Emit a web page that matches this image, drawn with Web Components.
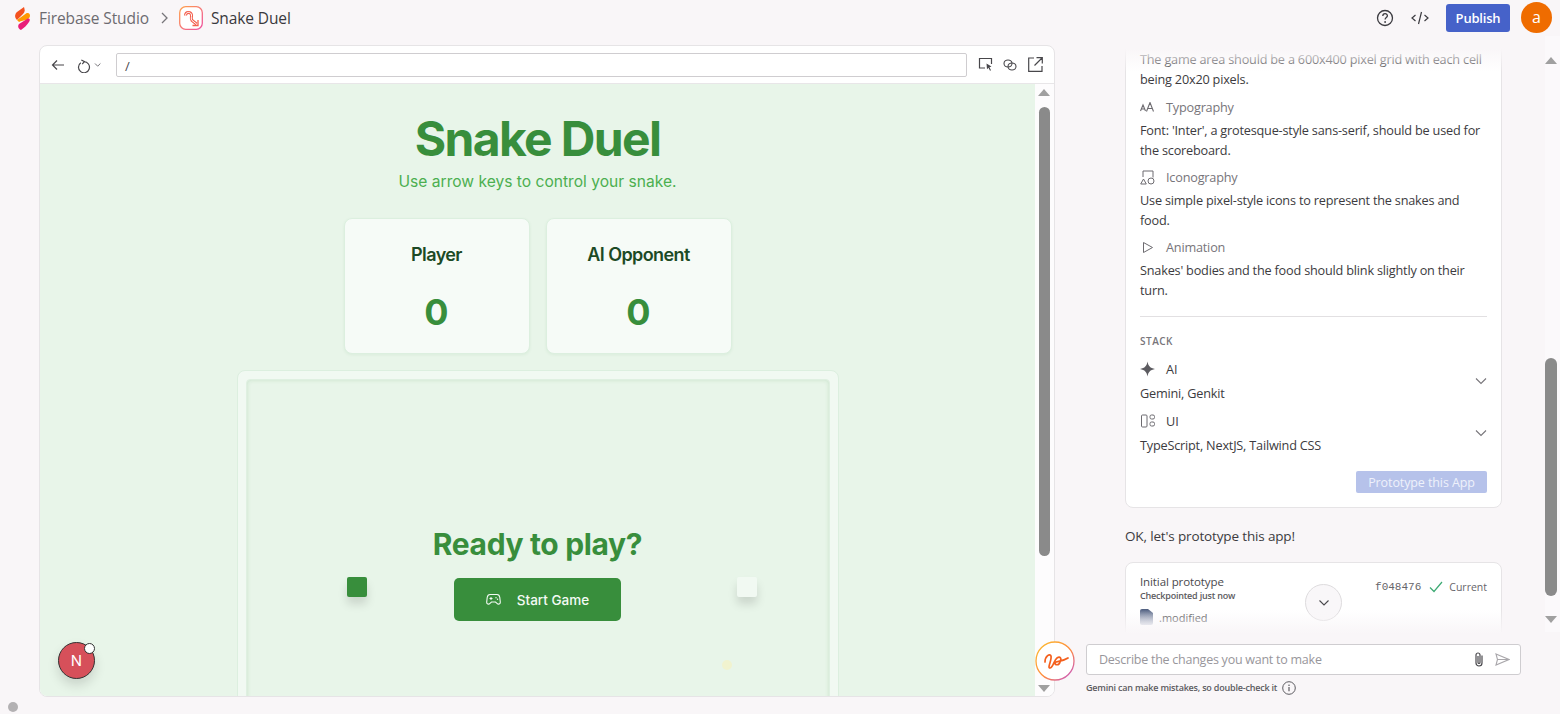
<!DOCTYPE html>
<html lang="en">
<head>
<meta charset="utf-8">
<title>Snake Duel</title>
<style>
  html, body { margin: 0; height: 100%; overflow: hidden; background: #f9f6f8; }
</style>
</head>
<body>
<app-shell>
  <top-bar slot="top"></top-bar>
  <preview-pane slot="left"></preview-pane>
  <chat-pane slot="right"></chat-pane>
</app-shell>

<script>
/*
* Small helper for the elements below.
*/
const define = (name, html) => {
  const template = document.createElement('template')
  template.innerHTML = html
  customElements.define(name, class extends HTMLElement {
    constructor () {
      super()
      this.attachShadow({ mode: 'open' }).appendChild(template.content.cloneNode(true))
    }
  })
}

define('app-shell', `
  <style>
    :host { display: block; width: 1560px; height: 714px; position: relative; overflow: hidden;
      font-family: "Open Sans", "Noto Sans", sans-serif; color: #3c3b40; }
    .main { display: flex; height: 678px; }
    .dot { position: absolute; left: 8px; top: 702px; width: 10px; height: 10px; border-radius: 50%; background: #b3b1b3; }
  </style>
  <slot name="top"></slot>
  <div class="main">
    <slot name="left"></slot>
    <slot name="right"></slot>
  </div>
  <div class="dot"></div>
`)

define('top-bar', `
  <style>
    :host { display: flex; align-items: center; height: 36px; padding: 0 8px 0 15px; box-sizing: border-box; }
    .brand { font-size: 15.5px; color: #6d6b70; margin-left: 8px; letter-spacing: -.1px; }
    .sep { margin: 0 9px 0 11px; display: flex; }
    .app { font-size: 15.5px; color: #3a393d; margin-left: 8px; letter-spacing: -.1px; }
    .grow { flex: 1; }
    .icons { display: flex; align-items: center; gap: 17px; margin-right: 17px; }
    .publish { background: #4662c9; color: #fff; border-radius: 3px; width: 64px; height: 28px; display: flex;
      align-items: center; justify-content: center; font-size: 13px; font-weight: 600; margin-right: 11px; letter-spacing: -.2px; }
    .avatar { width: 31px; height: 31px; border-radius: 50%; background: #ef6c00; color: #fff; display: flex;
      align-items: center; justify-content: center; font-size: 16px; margin-top: -2px; }
    svg { display: block; }
  </style>
  <svg width="16" height="23" viewBox="0 0 16 23">
    <path d="M9 0 C10 3 10 5 8 7 L2 13 C-1 10 0 7 2 5 Z" fill="#f4511e"/>
    <path d="M2 13 L11 6.500 C14 5 16 8 14.500 10.500 L12 13 C9 13 6 14 4 15 Z" fill="#ff9800"/>
    <path d="M4 17 L12 12 C15 10.500 15.500 13 14 15 C12 18 9 21 6 23 C3 21.500 2.500 19 4 17Z" fill="#e91e79"/>
  </svg>
  <span class="brand">Firebase Studio</span>
  <span class="sep"><svg width="10" height="12" viewBox="0 0 10 12"><path d="M2 1l5 5-5 5" fill="none" stroke="#77757a" stroke-width="1.3"/></svg></span>
  <svg width="24" height="24" viewBox="0 0 24 24">
    <defs><linearGradient id="g" x1="0" y1="0" x2="1" y2="1"><stop offset="0" stop-color="#ffa24a"/><stop offset="1" stop-color="#ee4fa0"/></linearGradient></defs>
    <rect x=".7" y=".7" width="22.6" height="22.6" rx="6" fill="#fff" stroke="url(#g)" stroke-width="1.3"/>
    <path d="M6.500 9.500C6.500 5.500 12 5.500 12.500 9c.3 2.500-1 3.500.5 5.500l4.500 3.500" fill="none" stroke="#f4604f" stroke-width="3"/>
    <path d="M6.500 9.500C6.500 5.500 12 5.500 12.500 9c.3 2.500-1 3.500.5 5.500l4.500 3.500" fill="none" stroke="#fff" stroke-width="1"/>
    <path d="M19 14v5.500h-5.500" fill="none" stroke="#f4604f" stroke-width="1.300"/>
  </svg>
  <span class="app">Snake Duel</span>
  <span class="grow"></span>
  <div class="icons">
    <svg width="18" height="18" viewBox="0 0 18 18"><circle cx="9" cy="9" r="7.5" fill="none" stroke="#3c3b40" stroke-width="1.3"/><path d="M6.8 7c0-3 4.6-3 4.6-.2 0 1.800-2.300 1.800-2.300 3.800" fill="none" stroke="#3c3b40" stroke-width="1.300"/><circle cx="9.100" cy="13" r=".9" fill="#3c3b40"/></svg>
    <svg width="18" height="14" viewBox="0 0 18 14"><path d="M4.500 4L1 7l3.500 3M13.500 4L17 7l-3.500 3M10.500 1L7.500 13" fill="none" stroke="#3c3b40" stroke-width="1.200"/></svg>
  </div>
  <div class="publish">Publish</div>
  <div class="avatar">a</div>
`)

define('preview-pane', `
  <style>
    :host { display: flex; flex-direction: column; width: 1016px; height: 652px; margin: 9px 0 0 39px; background: #fff;
      border: 1px solid #e6e4e6; border-radius: 8px; box-sizing: border-box; overflow: hidden; flex: none; position: relative; }
    .bar { height: 38px; flex: none; display: flex; align-items: center; padding: 0 11px 0 11px; gap: 7px; border-bottom: 1px solid #e8e6e8; box-sizing: border-box; }
    .url { flex: 1; height: 24px; border: 1px solid #cfcdd0; border-radius: 2px; font-size: 13px; line-height: 24px;
      padding-left: 8px; margin-left: 5px; margin-right: 4px; color: #4a494d; box-sizing: border-box; }
    .tools { display: flex; gap: 9px; align-items: center; }
    svg { display: block; }
    .body { flex: 1; display: flex; min-height: 0; }
    .view { flex: 1; min-width: 0; overflow: hidden; background: #e8f5e9; }
    .rail { width: 19px; flex: none; background: #fdfcfd; position: relative; }
    .thumb { position: absolute; top: 23px; left: 4px; width: 11px; height: 449px; background: #8a8a8a; border-radius: 6px; }
    .up, .down { position: absolute; left: 3px; width: 0; height: 0; border-left: 6.500px solid transparent; border-right: 6.500px solid transparent; }
    .up { top: 5px; border-bottom: 7px solid #a0a0a0; }
    .down { bottom: 4px; border-top: 7px solid #a0a0a0; }
    .badge { position: absolute; left: 18px; top: 596px; width: 37px; height: 37px; border-radius: 50%; background: #d6505a;
      border: 1px solid #333; box-sizing: border-box; box-shadow: 0 6px 12px rgba(0,0,0,.14); color: #fff; display: flex;
      align-items: center; justify-content: center; font: 15px Inter, sans-serif; }
    .badge i { position: absolute; right: -1px; top: 0; width: 9px; height: 9px; border-radius: 50%; background: #fff; border: 1px solid #333; }
  </style>
  <div class="bar">
    <svg width="14" height="12" viewBox="0 0 14 12"><path d="M13 6H1.500M6 1.500L1.500 6 6 10.500" fill="none" stroke="#48474b" stroke-width="1.200"/></svg>
    <svg width="27" height="16" viewBox="0 0 27 16" style="margin-left:5px"><path d="M4.300 1.500l3 1.500-2 2.700M7 3.200A5.500 5.500 0 1 1 3.800 4.200" fill="none" stroke="#48474b" stroke-width="1.200" transform="translate(0 1.500)"/><path d="M18 6.500l2.700 2.700 2.700-2.700" fill="none" stroke="#77757a"/></svg>
    <div class="url">/</div>
    <div class="tools">
      <svg width="16" height="15" viewBox="0 0 16 15"><path d="M7 11H1.500V1.500h12V7" fill="none" stroke="#48474b" stroke-width="1.200"/><path d="M8.500 6.500l5 3-2 .8 1.500 3-1 .5-1.500-3-1.500 1.500z" fill="#48474b"/></svg>
      <svg width="14" height="12" viewBox="0 0 14 12"><ellipse cx="5" cy="4.500" rx="4" ry="3.500" fill="none" stroke="#48474b" stroke-width="1.100"/><ellipse cx="9" cy="7.500" rx="4" ry="3.500" fill="none" stroke="#48474b" stroke-width="1.100"/></svg>
      <svg width="15" height="15" viewBox="0 0 15 15" style="margin-left:2px"><path d="M6 1H.7v13.300H14V9M8.500 .7h5.800v5.800M14 1L6.500 8.500" fill="none" stroke="#48474b" stroke-width="1.200"/></svg>
    </div>
  </div>
  <div class="body">
    <div class="view"><snake-game></snake-game></div>
    <div class="rail"><span class="up"></span><span class="thumb"></span><span class="down"></span></div>
  </div>
  <div class="badge">N<i></i></div>
`)

define('score-card', `
  <style>
    :host { display: flex; flex-direction: column; align-items: center; width: 186px; height: 136px; box-sizing: border-box;
      background: #f6fbf7; border: 1px solid #dcefdf; border-radius: 8px; box-shadow: 0 1px 3px rgba(56,142,60,.08); }
    .name { font-size: 18px; font-weight: 600; color: #1c4a25; margin-top: 24px; line-height: 24px; letter-spacing: -.6px; }
    .score { font-size: 36px; font-weight: 700; color: #388e3c; margin-top: 23px; line-height: 44px; }
  </style>
  <div class="name"><slot name="name"></slot></div>
  <div class="score"><slot></slot></div>
`)

define('snake-game', `
  <style>
    :host { display: flex; flex-direction: column; align-items: center; font-family: Inter, sans-serif; padding-top: 26px; }
    h1 { margin: 0; font-size: 48px; line-height: 58px; font-weight: 700; color: #388e3c; letter-spacing: -1.650px; }
    p { margin: 2px 0 0; font-size: 15.600px; line-height: 24px; color: #4caf50; }
    .scores { display: flex; gap: 16px; margin-top: 24px; }
    .outer { margin-top: 16px; width: 602px; height: 500px; flex: none; box-sizing: border-box; padding: 8px; background: #f1f9f2;
      border: 1px solid #dcefdf; border-radius: 8px; }
    .board { position: relative; height: 100%; box-sizing: border-box; background: #e8f5e9; border: 1px solid #dff0e1; border-radius: 4px;
      box-shadow: inset 0 0 4px rgba(56,142,60,.18); display: flex; flex-direction: column; align-items: center; padding-top: 146px; }
    h2 { margin: 0; font-size: 30px; line-height: 36px; font-weight: 700; color: #388e3c; letter-spacing: -.35px; }
    .start { margin-top: 16px; width: 167px; height: 43px; background: #388e3c; color: #f3faf4; border-radius: 5px; display: flex;
      align-items: center; justify-content: center; gap: 16px; font-size: 13.500px; font-weight: 500; }
    .cell { position: absolute; top: 197px; width: 20px; height: 20px; border-radius: 2px; box-shadow: 0 7px 10px rgba(0,0,0,.13); }
    .food { position: absolute; left: 475px; top: 280px; width: 10px; height: 10px; border-radius: 50%; background: #f1f3cf; }
    svg { display: block; }
  </style>
  <h1>Snake Duel</h1>
  <p>Use arrow keys to control your snake.</p>
  <div class="scores">
    <score-card><span slot="name">Player</span>0</score-card>
    <score-card><span slot="name">AI Opponent</span>0</score-card>
  </div>
  <div class="outer">
    <div class="board">
      <h2>Ready to play?</h2>
      <div class="start">
        <svg width="15" height="13" viewBox="0 0 15 13"><path d="M4 1.500h7c1.800 0 2.500 1 2.800 3l.5 4.500c.2 2.200-2 2.800-3.300 1.300L9.500 9h-4L4 10.300C2.700 11.800.5 11.200.7 9l.5-4.500c.3-2 1-3 2.800-3z" fill="none" stroke="#f3faf4" stroke-width="1.100"/><path d="M3.500 5.500h3M5 4v3" stroke="#f3faf4"/><circle cx="10" cy="4.700" r=".7" fill="#f3faf4"/><circle cx="11.500" cy="6.300" r=".7" fill="#f3faf4"/></svg>
        <span>Start Game</span>
      </div>
      <div class="cell" style="left: 100px; background: #388e3c"></div>
      <div class="cell" style="left: 490px; background: #f1f9f2"></div>
      <div class="food"></div>
    </div>
  </div>
`)

define('spec-item', `
  <style>
    :host { display: block; }
    .head { display: flex; align-items: center; gap: 11px; height: 20px; color: #77757a; font-size: 12.700px; margin-bottom: 4px; letter-spacing: -.2px; }
    .ico { width: 15px; display: flex; justify-content: center; }
    .text { font-size: 12.700px; line-height: 19.500px; font-weight: 500; color: #3c3b40; letter-spacing: -.2px; }
  </style>
  <div class="head"><span class="ico"><slot name="icon"></slot></span><slot name="title"></slot></div>
  <div class="text"><slot></slot></div>
`)

define('stack-item', `
  <style>
    :host { display: block; position: relative; }
    .head { display: flex; align-items: center; gap: 11px; height: 24px; font-size: 12.700px; font-weight: 500; color: #3c3b40; }
    .ico { width: 15px; display: flex; justify-content: center; }
    .text { font-size: 12.700px; line-height: 20px; font-weight: 500; color: #3c3b40; margin-top: 2px; letter-spacing: -.2px; }
    svg.chev { position: absolute; right: 2px; top: 20px; }
  </style>
  <div class="head"><span class="ico"><slot name="icon"></slot></span><slot name="title"></slot></div>
  <div class="text"><slot></slot></div>
  <svg class="chev" width="12" height="8" viewBox="0 0 12 8"><path d="M1 1.500l5 5 5-5" fill="none" stroke="#77757a" stroke-width="1.100"/></svg>
`)

define('chat-pane', `
  <style>
    :host { display: block; flex: 1; position: relative; min-width: 0; }
    .scroll { position: absolute; left: 70px; top: 0; width: 377px; height: 600px; overflow: hidden; }
    .fade-top { position: absolute; left: 0; right: 0; top: 0; height: 36px;
      background: linear-gradient(#f9f6f8 35%, rgba(249,246,248,0)); z-index: 2; }
    .fade-bottom { position: absolute; left: 0; right: 0; top: 574px; height: 26px;
      background: linear-gradient(rgba(249,246,248,0), #f9f6f8 90%); z-index: 2; }
    .card { background: #fff; border: 1px solid #e6e4e6; border-radius: 8px; box-sizing: border-box; }
    .blueprint { padding: 0 12px 14px 14px; margin-top: -3px; height: 475px; display: flex; flex-direction: column; }
    spec-item { margin-top: 7px; }
    .intro + spec-item { margin-top: 8px; }
    .intro { font-size: 12.700px; line-height: 19.500px; font-weight: 500; color: #3c3b40; padding-top: 16px; letter-spacing: -.2px; }
    hr { border: 0; border-top: 1px solid #e2e0e2; margin: 16px 2px 0 0; }
    .label { font-size: 10px; font-weight: 600; letter-spacing: .5px; color: #77757a; margin-top: 17px; line-height: 14px; }
    stack-item { margin-top: 9px; }
    stack-item + stack-item { margin-top: 6px; }
    .cta { align-self: flex-end; margin: 16px 2px 0 0; width: 131px; height: 26px; background: #b6c2ea; border-radius: 2px; color: #eef1fb;
      font-size: 12.500px; display: flex; align-items: center; justify-content: center; font-weight: 500; letter-spacing: -.1px; }
    .ok { font-size: 13.500px; margin: 18px 0 16px; line-height: 20px; color: #3c3b40; letter-spacing: -.15px; }
    .check { height: 140px; padding: 11px 14px; position: relative; }
    .check .t { font-size: 11.500px; line-height: 16px; color: #4a494d; letter-spacing: -.1px; }
    .check .s { font-size: 9px; line-height: 11px; font-weight: 600; color: #5c5b60; letter-spacing: -.2px; }
    .file { display: flex; align-items: center; gap: 6px; margin-top: 8px; font-size: 11px; color: #4a494d; }
    .hash { position: absolute; right: 14px; top: 17px; display: flex; align-items: center; gap: 6px; font-size: 10.500px; color: #66656a; }
    .hash b { font: 11px "Liberation Mono", monospace; margin-right: 2px; }
    .down { position: absolute; left: 179px; top: 21px; width: 37px; height: 37px; border-radius: 50%; border: 1px solid #dedcde; background: #f9f7f9;
      box-sizing: border-box; display: flex; align-items: center; justify-content: center; }
    .rail { position: absolute; left: 490px; top: 0; width: 15px; height: 596px; background: #fbf9fb; }
    .rail .thumb { position: absolute; left: 0; top: 322px; width: 12px; height: 238px; background: #8a8a8a; border-radius: 6px; }
    .rail .up, .rail .dn { position: absolute; left: 0; width: 0; height: 0; border-left: 6.500px solid transparent; border-right: 6.500px solid transparent; }
    .rail .up { top: 21px; border-bottom: 7px solid #a0a0a0; }
    .rail .dn { top: 580px; border-top: 7px solid #a0a0a0; }
    .gem { position: absolute; left: -20px; top: 605px; z-index: 3; }
    .input { position: absolute; left: 31px; top: 608px; width: 435px; height: 31px; background: #fff; border: 1px solid #cfcdd0; border-radius: 3px; box-sizing: border-box;
      display: flex; align-items: center; padding: 0 10px 0 12px; gap: 11px; font-size: 12.500px; letter-spacing: -.25px; color: #98969b; z-index: 3; }
    .input span { flex: 1; }
    .note { position: absolute; left: 31px; top: 645px; display: flex; align-items: center; gap: 5px; font-size: 9px; font-weight: 600; color: #5c5b60; line-height: 14px; letter-spacing: -.2px; }
    svg { display: block; }
  </style>
  <div class="scroll">
    <div class="fade-top"></div>
    <div class="card blueprint">
      <div class="intro">The game area should be a 600x400 pixel grid with each cell being 20x20 pixels.</div>
      <spec-item>
        <svg slot="icon" width="15" height="10" viewBox="0 0 15 10"><path d="M.5 9l2.500-6 2.500 6M1.500 7h3M6.500 9.500l3.500-9 3.500 9M7.800 6.500h4.500" fill="none" stroke="#6d6b70" stroke-width="1.100"/></svg>
        <span slot="title">Typography</span>
        Font: 'Inter', a grotesque-style sans-serif, should be used for the scoreboard.
      </spec-item>
      <spec-item>
        <svg slot="icon" width="15" height="15" viewBox="0 0 15 15"><path d="M3 7V1h10v6.500M.7 14l2.800-5 2.800 5z" fill="none" stroke="#6d6b70"/><circle cx="11" cy="11" r="3" fill="none" stroke="#6d6b70"/></svg>
        <span slot="title">Iconography</span>
        Use simple pixel-style icons to represent the snakes and food.
      </spec-item>
      <spec-item>
        <svg slot="icon" width="12" height="13" viewBox="0 0 12 13"><path d="M1.500 1.500l9 5-9 5z" fill="none" stroke="#6d6b70"/></svg>
        <span slot="title">Animation</span>
        Snakes' bodies and the food should blink slightly on their turn.
      </spec-item>
      <hr>
      <div class="label">STACK</div>
      <stack-item>
        <svg slot="icon" width="16" height="16" viewBox="0 0 16 16"><path d="M8 0c.8 4.800 2.800 7 8 8-5.200 1-7.200 3.200-8 8-.8-4.800-2.800-7-8-8 5.200-1 7.200-3.200 8-8z" fill="#5c5b60"/></svg>
        <span slot="title">AI</span>
        Gemini, Genkit
      </stack-item>
      <stack-item>
        <svg slot="icon" width="14" height="14" viewBox="0 0 14 14"><rect x=".5" y="1" width="5.500" height="12" rx="1" fill="none" stroke="#6d6b70"/><rect x="9" y="1" width="4.500" height="4" rx="1.500" fill="none" stroke="#6d6b70"/><rect x="9" y="8" width="4.500" height="4" rx="1.500" fill="none" stroke="#6d6b70"/></svg>
        <span slot="title">UI</span>
        TypeScript, NextJS, Tailwind CSS
      </stack-item>
      <div class="cta">Prototype this App</div>
    </div>
    <div class="ok">OK, let's prototype this app!</div>
    <div class="card check">
      <div class="t">Initial prototype</div>
      <div class="s">Checkpointed just now</div>
      <div class="file">
        <svg width="13" height="16" viewBox="0 0 13 16"><defs><linearGradient id="f" x1="0" y1="0" x2="0" y2="1"><stop offset="0" stop-color="#4f5f80"/><stop offset="1" stop-color="#c9cedb"/></linearGradient></defs><path d="M2 0h6l5 4v10a2 2 0 0 1-2 2H2a2 2 0 0 1-2-2V2a2 2 0 0 1 2-2z" fill="url(#f)"/></svg>
        <span>.modified</span>
      </div>
      <div class="hash"><b>f048476</b>
        <svg width="14" height="12" viewBox="0 0 14 12"><path d="M1 6.500l4 4L13 1" fill="none" stroke="#3eaa74" stroke-width="1.200"/></svg>
        <span>Current</span></div>
      <div class="down"><svg width="12" height="8" viewBox="0 0 12 8"><path d="M1.500 1.500L6 6l4.500-4.500" fill="none" stroke="#4a494d" stroke-width="1.100"/></svg></div>
    </div>
    <div class="fade-bottom"></div>
  </div>
  <div class="rail"><span class="up"></span><span class="thumb"></span><span class="dn"></span></div>
  <svg class="gem" width="40" height="40" viewBox="0 0 40 40">
    <defs><linearGradient id="r" x1="0" y1="0" x2="1" y2="1"><stop offset="0" stop-color="#fbc02d"/><stop offset=".55" stop-color="#ff8a3d"/><stop offset="1" stop-color="#c04fd8"/></linearGradient></defs>
    <circle cx="20" cy="20" r="19" fill="#fff" stroke="url(#r)" stroke-width="1.300"/>
    <path d="M10 21C10 15 15 12 16 15 17 19 12 27 15 27 18 27 19 19 22 17 25 15 27 17 25 21 24 25 20 24 20 22 20 20 27 21 33 17" fill="none" stroke="#f4601e" stroke-width="1.700" stroke-linecap="round"/>
  </svg>
  <div class="input">
    <span>Describe the changes you want to make</span>
    <svg width="10" height="15" viewBox="0 0 10 15"><path d="M8 3.500v7.500a3 3 0 0 1-6 0V3a2 2 0 0 1 4 0v7.500a.9.900 0 0 1-2 0V4" fill="none" stroke="#4a494d" stroke-width="1.200"/></svg>
    <svg width="15" height="13" viewBox="0 0 15 13"><path d="M1 1l13 5.500L1 12l1.500-5.500zM2.500 6.500H14" fill="none" stroke="#a9a7ab" stroke-width="1.100"/></svg>
  </div>
  <div class="note"><span>Gemini can make mistakes, so double-check it</span>
    <svg width="14" height="14" viewBox="0 0 14 14" style="margin-left:0"><circle cx="7" cy="7" r="6.300" fill="none" stroke="#5c5b60"/><path d="M7 6v4.300" stroke="#5c5b60" stroke-width="1.200"/><circle cx="7" cy="4.200" r=".8" fill="#5c5b60"/></svg>
  </div>
`)
</script>
</body>
</html>
